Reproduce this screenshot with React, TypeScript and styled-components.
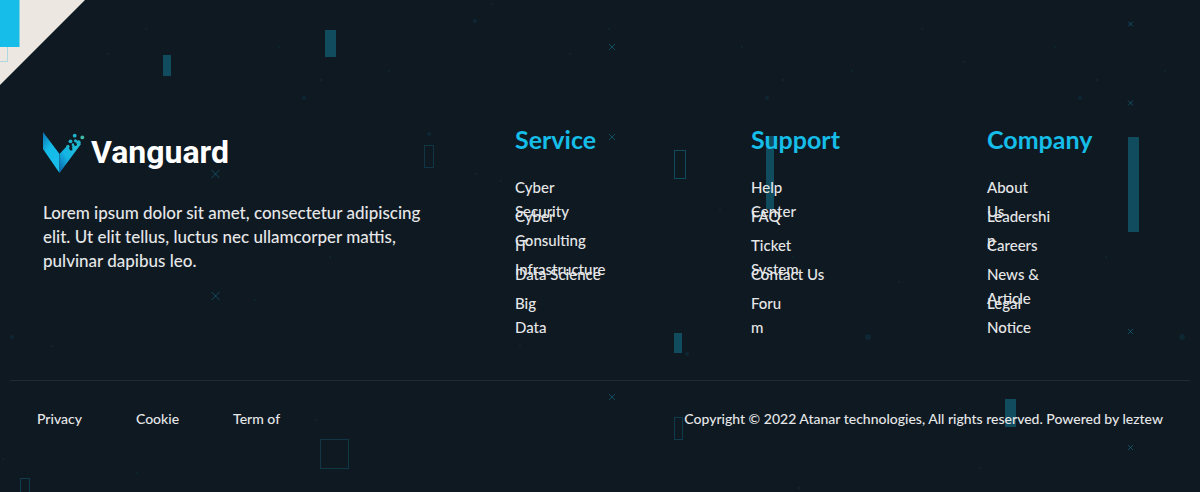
import React from "react";
import styled, { createGlobalStyle } from "styled-components";

const GlobalStyle = createGlobalStyle`
  *, *::before, *::after { box-sizing: border-box; }
  body { margin: 0; background: #0f1922; }
`;

const Footer = styled.footer`
  position: relative;
  isolation: isolate;
  min-height: 100vh;
  overflow: hidden;
  padding: 123px 10px 48px;
  background: #0f1922;
  color: #e6e7e8;
  font-family: Lato, "Open Sans", sans-serif;
  font-weight: 500;
`;

const Backdrop = styled.svg`
  position: absolute;
  inset: 0;
  z-index: -1;
  width: 100%;
  height: 100%;
`;

const Columns = styled.div`
  display: grid;
  grid-template-columns: 2fr 1fr 1fr 1fr;
  min-height: 257px;
`;

const Brand = styled.section`
  padding: 9px 33px 0;
`;

const Logo = styled.a`
  display: flex;
  align-items: flex-start;
  gap: 6px;
  height: 42px;
  color: #ffffff;
  text-decoration: none;
`;

const LogoMark = styled.svg`
  flex: none;
  width: 42px;
  height: 42px;
`;

const Wordmark = styled.span`
  font: 700 32px/40px Roboto, sans-serif;
`;

const Description = styled.p`
  margin: 27px 0 0;
  font-size: 17px;
  line-height: 24px;
`;

const LinkColumn = styled.nav`
  padding: 0 33px;
`;

const Heading = styled.h2`
  margin: 0;
  color: #15bde8;
  font-size: 25px;
  font-weight: 700;
  line-height: 32px;
`;

const LinkList = styled.ul`
  margin: 20px 0 0;
  padding: 0;
  list-style: none;
`;

const LinkItem = styled.li`
  height: 29px;
`;

const FooterLink = styled.a`
  display: block;
  color: inherit;
  font-size: 15px;
  line-height: 24px;
  white-space: nowrap;
  text-decoration: none;
`;

const BottomBar = styled.div`
  display: flex;
  flex-wrap: wrap;
  align-items: center;
  justify-content: space-between;
  padding: 28px 27px 0;
  border-top: 1px solid #1c2b38;
  font-size: 14px;
  line-height: 20px;
`;

const LegalLinks = styled.nav`
  display: flex;
  gap: 54px;
`;

const LegalLink = styled.a`
  color: inherit;
  text-decoration: none;
`;

const Copyright = styled.p`
  margin: 0;
`;

const columns: { title: string; links: string[][] }[] = [
  {
    title: "Service",
    links: [["Cyber", "Security"], ["Cyber", "Consulting"], ["IT", "Infrastructure"], ["Data Science"], ["Big", "Data"]],
  },
  {
    title: "Support",
    links: [["Help", "Center"], ["FAQ"], ["Ticket", "System"], ["Contact Us"], ["Foru", "m"]],
  },
  {
    title: "Company",
    links: [["About", "Us"], ["Leadershi", "p"], ["Careers"], ["News &", "Article"], ["Legal", "Notice"]],
  },
];

const bars = [
  [163, 55, 8, 21], [325, 30, 11, 27], [766, 136, 8, 73],
  [1128, 137, 11, 95], [674, 333, 8, 20], [1005, 399, 11, 28],
];
const frames = [
  [424, 145, 9, 22, 0.2], [674, 150, 11, 28, 0.35], [320, 439, 28, 29, 0.22],
  [674, 417, 8, 22, 0.25], [20, 478, 9, 22, 0.25],
];
const crosses = [
  [612, 47, 3], [612, 137, 3], [1130.5, 24, 2.5], [1130.5, 103, 2.5], [215.5, 174, 4],
  [215.5, 296, 4], [1130.5, 331.5, 2.5], [612, 397, 3], [1130.5, 447.5, 2.5],
];
const dots = [
  [146, 29, 1], [108, 54, 1], [279, 47, 1], [389, 71, 1], [321, 80, 1], [304, 98, 2],
  [492, 4, 1], [475, 21, 2], [609, 29, 1], [570, 54, 1], [742, 47, 1], [783, 80, 1],
  [767, 98, 2], [852, 71, 1], [922, 29, 1], [964, 62, 1], [1055, 47, 1], [1097, 80, 1],
  [1080, 98, 2], [1165, 71, 1], [429, 134, 2], [476, 174, 1], [501, 181, 1], [720, 210, 1],
  [1106, 257, 1], [868, 337, 3], [1182, 337, 3], [687, 354, 2], [330, 257, 1], [255, 300, 1],
  [12, 337, 2], [52, 346, 1], [520, 346, 1], [793, 257, 1], [899, 282, 1], [3, 459, 1],
  [137, 473, 1], [336, 472, 1], [316, 420, 1], [960, 408, 1], [980, 468, 1], [799, 488, 1],
];

function Decoration() {
  return (
    <Backdrop viewBox="0 0 1200 492" preserveAspectRatio="xMinYMin slice" aria-hidden="true">
      <path d="M0 0H85L0 85Z" fill="#ece8e1" />
      <path d="M0 61.5H7.5V47" fill="none" stroke="#8ccfe0" strokeOpacity=".65" />
      <rect width="19.5" height="47" fill="#15bde8" />
      <g fill="#114c5e">
        {bars.map(([x, y, w, h]) => <rect key={`${x}-${y}`} x={x} y={y} width={w} height={h} />)}
      </g>
      <g fill="none" stroke="#15a5cc">
        {frames.map(([x, y, w, h, o]) => (
          <rect key={`${x}-${y}`} x={x + 0.5} y={y + 0.5} width={w} height={h} strokeOpacity={o} />
        ))}
        {crosses.map(([x, y, r]) => (
          <path key={`${x}-${y}`} d={`M${x - r} ${y - r}l${2 * r} ${2 * r}m0 ${-2 * r}l${-2 * r} ${2 * r}`} strokeOpacity=".36" />
        ))}
      </g>
      <g fill="#15a5cc" fillOpacity=".1">
        {dots.map(([x, y, r]) => <circle key={`${x}-${y}`} cx={x} cy={y} r={r} />)}
      </g>
    </Backdrop>
  );
}

function VanguardMark() {
  return (
    <LogoMark viewBox="0 0 42 42" aria-hidden="true">
      <defs>
        <linearGradient id="leftBlade" x1="0" y1="0" x2=".6" y2="1">
          <stop offset="0" stopColor="#0870b0" />
          <stop offset=".45" stopColor="#15bbe8" />
          <stop offset="1" stopColor="#18bdea" />
        </linearGradient>
        <linearGradient id="rightBlade" x1="0" y1=".8" x2=".8" y2="0">
          <stop offset="0" stopColor="#0b73b4" />
          <stop offset=".4" stopColor="#14b4e4" />
          <stop offset="1" stopColor="#20bfd6" />
        </linearGradient>
      </defs>
      <path d="M0 0L16.500 22V41L0 17Z" fill="url(#leftBlade)" />
      <path d="M16.500 22L24 14L27.500 17.500L31 13L34.500 9.500L38 12L16.500 41Z" fill="url(#rightBlade)" />
      <g fill="#1fb4cc">
        <circle cx="31.700" cy="3.700" r="1.900" />
        <circle cx="27.500" cy="9.300" r="1.900" />
        <circle cx="32.500" cy="8.800" r="1.600" />
        <circle cx="25" cy="14.500" r="1.700" />
        <circle cx="30" cy="13" r="1.700" />
        <circle cx="35.500" cy="10.500" r="2.200" />
      </g>
      <g fill="#0f1922">
        <circle cx="27.500" cy="13" r="1.300" />
        <circle cx="32.500" cy="12.500" r="1.400" />
        <circle cx="28" cy="17" r="1.500" />
      </g>
      <circle cx="39.300" cy="5.400" r="1.900" fill="#3eb9a5" />
    </LogoMark>
  );
}

export default function App() {
  return (
    <>
      <GlobalStyle />
      <Footer>
        <Decoration />
        <Columns>
          <Brand>
            <Logo href="#">
              <VanguardMark />
              <Wordmark>Vanguard</Wordmark>
            </Logo>
            <Description>
              Lorem ipsum dolor sit amet, consectetur adipiscing elit. Ut elit tellus, luctus nec ullamcorper mattis,
              pulvinar dapibus leo.
            </Description>
          </Brand>
          {columns.map(({ title, links }) => (
            <LinkColumn key={title} aria-label={title}>
              <Heading>{title}</Heading>
              <LinkList>
                {links.map((lines) => (
                  <LinkItem key={lines.join(" ")}>
                    <FooterLink href="#">
                      {lines.map((line, i) => (
                        <React.Fragment key={line}>
                          {i > 0 && <br />}
                          {line}
                        </React.Fragment>
                      ))}
                    </FooterLink>
                  </LinkItem>
                ))}
              </LinkList>
            </LinkColumn>
          ))}
        </Columns>
        <BottomBar>
          <LegalLinks aria-label="Legal">
            <LegalLink href="#">Privacy</LegalLink>
            <LegalLink href="#">Cookie</LegalLink>
            <LegalLink href="#">Term of</LegalLink>
          </LegalLinks>
          <Copyright>Copyright © 2022 Atanar technologies, All rights reserved. Powered by leztew</Copyright>
        </BottomBar>
      </Footer>
    </>
  );
}
